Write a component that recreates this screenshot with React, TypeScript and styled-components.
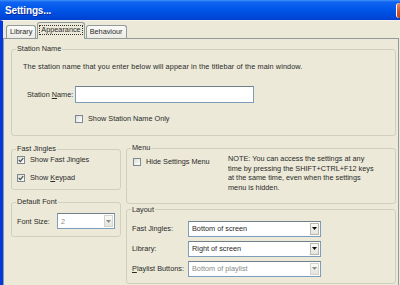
import React from 'react';
import styled, { createGlobalStyle } from 'styled-components';

const GlobalStyle = createGlobalStyle`
  *, *::before, *::after {
    box-sizing: border-box;
  }
  html, body {
    margin: 0;
    padding: 0;
    background: #ece9d8;
    overflow: hidden;
  }
  body {
    font-family: "Liberation Sans", Arial, sans-serif;
    font-size: 7.3px;
    color: #2a2a2a;
  }
`;

const Window = styled.div`
  width: 400px;
  height: 285px;
  display: flex;
  flex-direction: column;
  overflow: hidden;
  background: #ece9d8;
`;

const TitleBar = styled.div`
  height: 20px;
  flex: none;
  display: flex;
  align-items: center;
  justify-content: space-between;
  padding-left: 5px;
  background: linear-gradient(
    #3f8ff6 0px,
    #1164f2 2px,
    #0057e9 45%,
    #0049dc 80%,
    #0040cf 100%
  );
`;

const Title = styled.span`
  color: #fff;
  font-weight: bold;
  font-size: 10px;
  letter-spacing: -0.15px;
  text-shadow: 1px 1px 0 #0a2a9a;
`;

const CloseEdge = styled.span`
  width: 4px;
  height: 15px;
  border-left: 1px solid #fff;
  border-radius: 3px 0 0 3px;
  background: linear-gradient(#ea8a66, #d4502a 60%, #c2421f);
`;

const Client = styled.div`
  flex: 1;
  min-height: 0;
  display: flex;
  flex-direction: column;
  padding-top: 1px;
  border-left: 3px solid #0639dd;
  border-top: 1px solid #f4f2e8;
`;

const TabStrip = styled.div`
  height: 16px;
  flex: none;
  display: flex;
  align-items: flex-end;
  padding-left: 3px;
`;

const Tab = styled.div<{ $active?: boolean }>`
  position: relative;
  z-index: ${(p) => (p.$active ? 1 : 0)};
  height: ${(p) => (p.$active ? '17px' : '13px')};
  margin-bottom: ${(p) => (p.$active ? '-1px' : '0')};
  margin-right: 1px;
  padding: ${(p) => (p.$active ? '3px 2px 0' : '2px 3px 0')};
  border: 1px solid #919b9c;
  border-bottom: none;
  border-radius: 3px 3px 0 0;
  background: ${(p) =>
    p.$active ? '#ece9d8' : 'linear-gradient(#fbfbf8, #ecebe4)'};
  line-height: 8px;
  white-space: nowrap;
`;

const FocusText = styled.span`
  display: inline-block;
  padding: 0 1px;
  outline: 1px dotted #333;
`;

const Panel = styled.div`
  flex: 1;
  width: 396px;
  padding: 6px 2px 0 7px;
  border: 1px solid #919b9c;
  border-bottom: none;
  background: #ece9d8;
`;

const GroupBox = styled.fieldset`
  margin: 0;
  padding: 0;
  min-width: 0;
  border: 1px solid #d0d0bf;
  border-radius: 3px;
`;

const Legend = styled.legend`
  margin-left: 4px;
  padding: 0 1px;
  line-height: 8px;
  font-size: 7.3px;
`;

const StationBody = styled.div`
  padding: 9px 0 12px 11px;
`;

const Description = styled.div`
  line-height: 10px;
  white-space: nowrap;
  letter-spacing: 0.1px;
`;

const NameRow = styled.div`
  display: flex;
  align-items: center;
  height: 17px;
  margin: 14px 0 0 4px;
`;

const FieldLabel = styled.span<{ $w: number }>`
  width: ${(p) => p.$w}px;
  flex: none;
  white-space: nowrap;
`;

const TextBox = styled.input`
  width: 179px;
  height: 17px;
  margin: 0;
  padding: 0 2px;
  border: 1px solid #7f9db9;
  border-top-color: #6f7f8c;
  background: #fff;
  font: inherit;
  outline: none;
`;

const CheckRow = styled.div<{ $indent?: number; $mt?: number }>`
  display: flex;
  align-items: center;
  gap: 5px;
  height: 9px;
  margin-left: ${(p) => p.$indent ?? 0}px;
  margin-top: ${(p) => p.$mt ?? 0}px;
  white-space: nowrap;
`;

const Box = styled.span`
  width: 8px;
  height: 8px;
  flex: none;
  display: flex;
  align-items: center;
  justify-content: center;
  border: 1px solid #7d8891;
  background: linear-gradient(135deg, #dcdcd6, #fff);
`;

const U = styled.span`
  text-decoration: underline;
`;

const Columns = styled.div`
  display: grid;
  grid-template-columns: 110px 270px;
  column-gap: 5px;
  margin-top: 8px;
`;

const Stack = styled.div<{ $gap: number; $pt?: number }>`
  display: flex;
  flex-direction: column;
  gap: ${(p) => p.$gap}px;
  padding-top: ${(p) => p.$pt ?? 0}px;
`;

const JinglesBody = styled.div`
  display: flex;
  flex-direction: column;
  gap: 9px;
  padding: 2px 0 7px 5px;
`;

const FontBody = styled.div`
  display: flex;
  align-items: center;
  padding: 7px 4px 7px 5px;
`;

const MenuBody = styled.div`
  display: flex;
  align-items: flex-start;
  padding: 2px 0 10px 6px;
`;

const MenuOption = styled.div`
  width: 95px;
  flex: none;
  padding-top: 3px;
`;

const Note = styled.div`
  line-height: 9.7px;
  white-space: nowrap;
`;

const LayoutBody = styled.div`
  display: flex;
  flex-direction: column;
  gap: 4px;
  padding: 7px 0 6px 5px;
`;

const LayoutRow = styled.div`
  display: flex;
  align-items: center;
  height: 16px;
`;

const Select = styled.div<{ $w: number; $dim?: boolean }>`
  width: ${(p) => p.$w}px;
  height: 16px;
  display: flex;
  align-items: center;
  justify-content: space-between;
  padding: 0 1px 0 3px;
  border: 1px solid #7f9db9;
  border-top-color: #6f7f8c;
  background: #fff;
  color: ${(p) => (p.$dim ? '#8a8a8a' : '#2a2a2a')};
  white-space: nowrap;
`;

const DropButton = styled.span<{ $dim?: boolean }>`
  width: 9px;
  height: 12px;
  display: flex;
  align-items: center;
  justify-content: center;
  border: 1px solid ${(p) => (p.$dim ? '#d4d4cc' : '#b9b9b0')};
  background: linear-gradient(#fafaf7, #e4e3dc);
`;

const Check = ({ on }: { on?: boolean }) => (
  <Box>
    {on && (
      <svg width="6" height="6" viewBox="0 0 6 6">
        <polyline
          points="0.8,3 2.4,4.6 5.2,1.2"
          fill="none"
          stroke="#4a4f52"
          strokeWidth="1.3"
        />
      </svg>
    )}
  </Box>
);

const Dropdown = ({
  value,
  width,
  dim,
}: {
  value: string;
  width: number;
  dim?: boolean;
}) => (
  <Select $w={width} $dim={dim}>
    <span>{value}</span>
    <DropButton $dim={dim}>
      <svg width="5" height="3" viewBox="0 0 5 3">
        <polygon points="0,0 5,0 2.5,3" fill={dim ? '#8c8c8c' : '#111'} />
      </svg>
    </DropButton>
  </Select>
);

const App: React.FC = () => {
  return (
    <Window>
      <GlobalStyle />
      <TitleBar>
        <Title>Settings...</Title>
        <CloseEdge />
      </TitleBar>
      <Client>
        <TabStrip>
          <Tab>Library</Tab>
          <Tab $active>
            <FocusText>Appearance</FocusText>
          </Tab>
          <Tab>Behaviour</Tab>
        </TabStrip>
        <Panel>
          <GroupBox>
            <Legend>Station Name</Legend>
            <StationBody>
              <Description>
                The station name that you enter below will appear in the
                titlebar of the main window.
              </Description>
              <NameRow>
                <FieldLabel $w={48}>
                  Station <U>N</U>ame:
                </FieldLabel>
                <TextBox defaultValue="" />
              </NameRow>
              <CheckRow $indent={52} $mt={11}>
                <Check />
                <span>Show Station Name Only</span>
              </CheckRow>
            </StationBody>
          </GroupBox>

          <Columns>
            <Stack $gap={8} $pt={1}>
              <GroupBox>
                <Legend>Fast Jingles</Legend>
                <JinglesBody>
                  <CheckRow>
                    <Check on />
                    <span>Show Fast Jingles</span>
                  </CheckRow>
                  <CheckRow>
                    <Check on />
                    <span>
                      Show <U>K</U>eypad
                    </span>
                  </CheckRow>
                </JinglesBody>
              </GroupBox>
              <GroupBox>
                <Legend>Default Font</Legend>
                <FontBody>
                  <FieldLabel $w={40}>Font Size:</FieldLabel>
                  <Dropdown value="2" width={58} dim />
                </FontBody>
              </GroupBox>
            </Stack>

            <Stack $gap={2}>
              <GroupBox>
                <Legend>Menu</Legend>
                <MenuBody>
                  <MenuOption>
                    <CheckRow>
                      <Check />
                      <span>Hide Settings Menu</span>
                    </CheckRow>
                  </MenuOption>
                  <Note>
                    NOTE: You can access the settings at any
                    <br />
                    time by pressing the SHIFT+CTRL+F12 keys
                    <br />
                    at the same time, even when the settings
                    <br />
                    menu is hidden.
                  </Note>
                </MenuBody>
              </GroupBox>
              <GroupBox>
                <Legend>Layout</Legend>
                <LayoutBody>
                  <LayoutRow>
                    <FieldLabel $w={56}>Fast Jingles:</FieldLabel>
                    <Dropdown value="Bottom of screen" width={133} />
                  </LayoutRow>
                  <LayoutRow>
                    <FieldLabel $w={56}>Library:</FieldLabel>
                    <Dropdown value="Right of screen" width={133} />
                  </LayoutRow>
                  <LayoutRow>
                    <FieldLabel $w={56}>
                      <U>P</U>laylist Buttons:
                    </FieldLabel>
                    <Dropdown value="Bottom of playlist" width={133} dim />
                  </LayoutRow>
                </LayoutBody>
              </GroupBox>
            </Stack>
          </Columns>
        </Panel>
      </Client>
    </Window>
  );
};

export default App;
